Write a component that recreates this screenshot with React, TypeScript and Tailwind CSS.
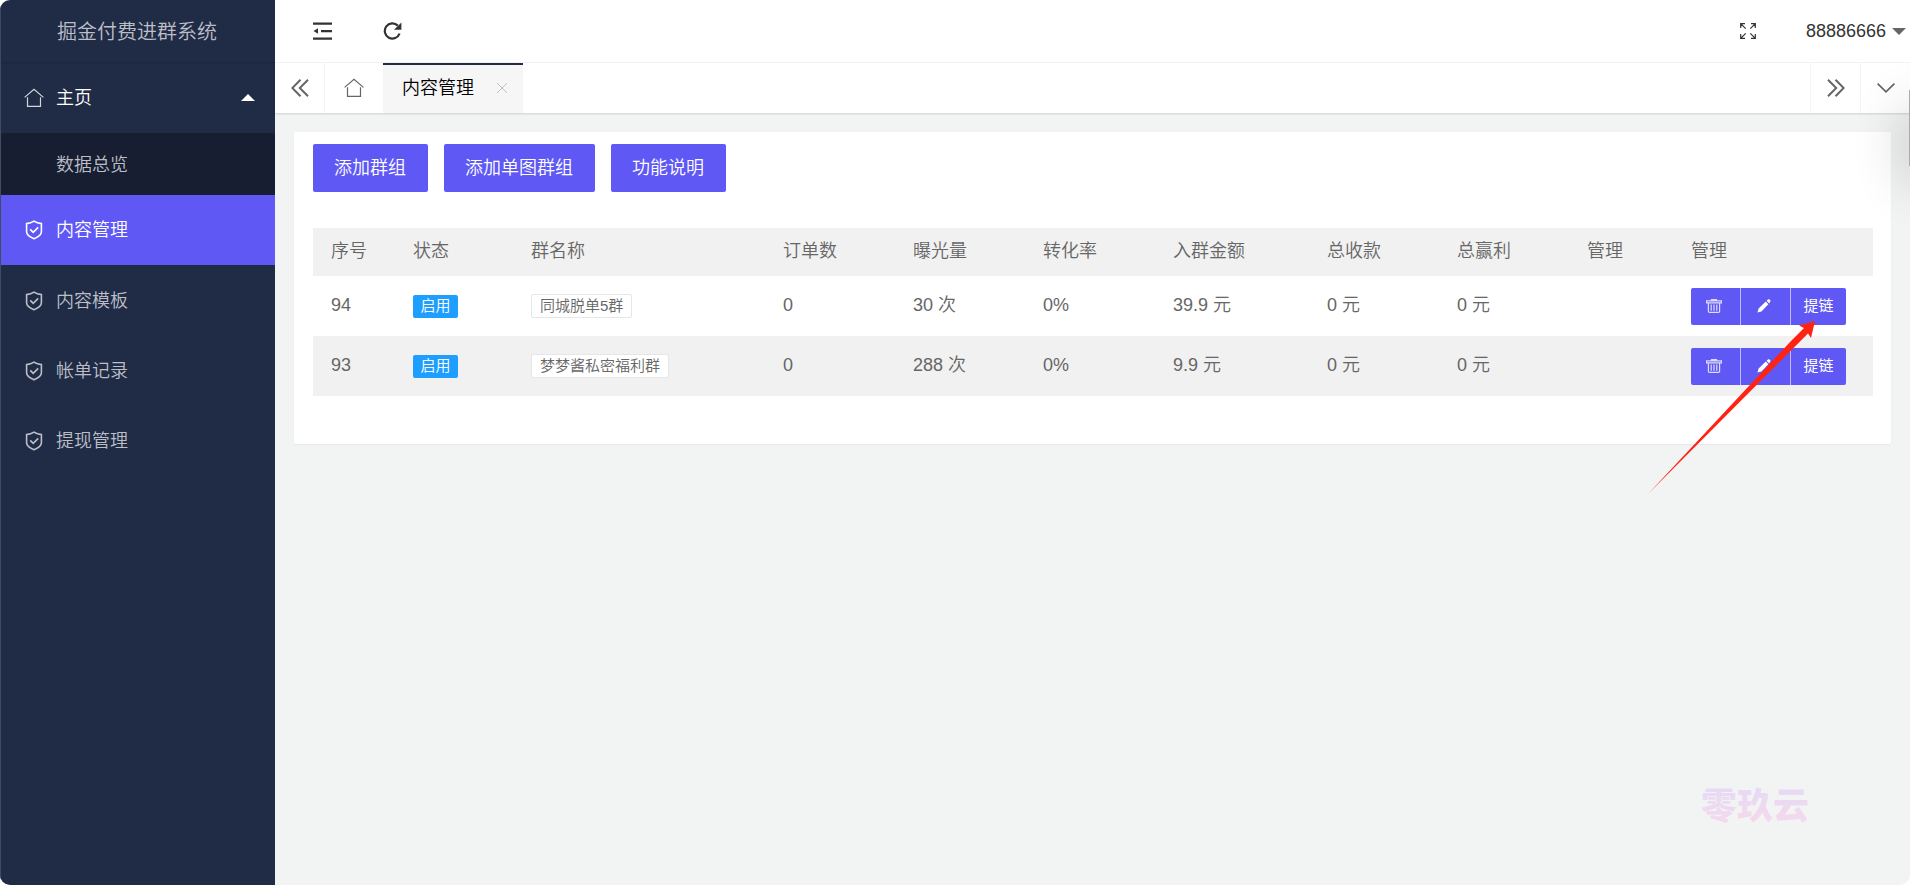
import React from "react";

type IconProps = { className?: string };

const HomeIcon = ({ className = "" }: IconProps) => (
  <svg viewBox="0 0 20 20" className={className} fill="none" stroke="currentColor" strokeWidth="1.2" aria-hidden="true">
    <path d="M0.6 9.4 10 1.4l9.400 8M3.500 9.200v9.200h13V9.200" />
  </svg>
);

const ShieldIcon = ({ className = "" }: IconProps) => (
  <svg viewBox="0 0 18 20" className={className} fill="none" stroke="currentColor" strokeWidth="1.6" aria-hidden="true">
    <path d="M9 1.2c2.2 1.5 4.6 2.2 7.4 2.4v8.2c0 3.4-3 5.2-7.4 7-4.400-1.800-7.400-3.600-7.400-7V3.600C4.400 3.400 6.800 2.700 9 1.200Z" />
    <path d="m5.200 9.400 3 3 5-5" />
  </svg>
);

const IndentIcon = () => (
  <svg viewBox="0 0 20 18" className="h-[18px] w-5" fill="currentColor" aria-hidden="true">
    <path d="M0 0.500h19v2.200H0zM8 8h11v2.200H8zM0 15.500h19v2.200H0zM0.500 9l4.500-2.800v5.600z" />
  </svg>
);

const RefreshIcon = () => (
  <svg viewBox="0 0 20 18" className="h-[18px] w-5" aria-hidden="true">
    <path d="M16.600 11.500A7.600 7.600 0 1 1 14.800 3.600" fill="none" stroke="currentColor" strokeWidth="2.200" />
    <path d="M18.400 0.400v7.400h-7.400z" fill="currentColor" />
  </svg>
);

const FullscreenIcon = () => (
  <svg viewBox="0 0 16 16" className="size-4" fill="none" stroke="currentColor" strokeWidth="1.200" aria-hidden="true">
    <path d="M0.700 5V0.700H5M0.700 0.700l5 5M11 0.700h4.300V5M15.300 0.700l-5 5M0.700 11v4.300H5M0.700 15.300l5-5M11 15.300h4.300V11M15.300 15.300l-5-5" />
  </svg>
);

const DoubleChevron = ({ className = "" }: IconProps) => (
  <svg viewBox="0 0 18 18" className={className} fill="none" stroke="currentColor" strokeWidth="2" aria-hidden="true">
    <path d="M9.500 0.800 1.300 9l8.200 8.200M17 0.800 8.800 9l8.200 8.200" />
  </svg>
);

const TrashIcon = () => (
  <svg viewBox="0 0 16 14" className="h-[14px] w-4 text-[#dedcfd]" fill="none" stroke="currentColor" strokeWidth="1.200" aria-hidden="true">
    <path d="M5.500 1.800V.6h5v1.200M.6 1.800h14.800v2H.6zM2.400 3.800v8.400c0 .8.400 1.200 1.200 1.200h8.800c.8 0 1.200-.4 1.200-1.200V3.800M5.200 5.500v6.200M8 5.500v6.200M10.800 5.500v6.200" />
  </svg>
);

const PencilIcon = () => (
  <svg viewBox="0 0 14 14" className="size-[14px]" fill="currentColor" aria-hidden="true">
    <path d="M0.400 13.600 1.600 9.600 8.800 2.600 11.400 5.200 4.400 12.400ZM9.600 1.800 10.900.6c.7-.6 1.500-.5 2.100.1s.7 1.400.1 2.100L12.200 4.400Z" />
  </svg>
);

const menu = ["内容管理", "内容模板", "帐单记录", "提现管理"];

const columns = [
  { label: "序号", width: "w-[82px]" },
  { label: "状态", width: "w-[118px]" },
  { label: "群名称", width: "w-[252px]" },
  { label: "订单数", width: "w-[130px]" },
  { label: "曝光量", width: "w-[130px]" },
  { label: "转化率", width: "w-[130px]" },
  { label: "入群金额", width: "w-[154px]" },
  { label: "总收款", width: "w-[130px]" },
  { label: "总赢利", width: "w-[130px]" },
  { label: "管理", width: "w-[104px]" },
  { label: "管理", width: "w-[200px]" },
];

const rows = [
  { id: "94", name: "同城脱单5群", orders: "0", views: "30 次", rate: "0%", price: "39.9 元", income: "0 元", profit: "0 元" },
  { id: "93", name: "梦梦酱私密福利群", orders: "0", views: "288 次", rate: "0%", price: "9.9 元", income: "0 元", profit: "0 元" },
];

function Sidebar() {
  return (
    <aside className="flex w-[275px] shrink-0 flex-col border-l border-[#414b62] bg-[#202b46] text-lg text-[#bcbfc7]">
      <h1 className="flex h-[62px] items-center justify-center pt-[2px] pr-[2px] text-xl shadow-[0_1px_2px_rgba(0,0,0,0.15)]">掘金付费进群系统</h1>
      <nav>
        <a href="#home" className="flex h-[71px] items-center pr-5 pl-[23px] text-white">
          <HomeIcon className="mr-3 size-5 text-[#d3d5da]" />
          <span className="flex-1">主页</span>
          <svg viewBox="0 0 14 7" className="h-[7px] w-[14px]" fill="currentColor" aria-hidden="true">
            <path d="M0 7 7 0l7 7z" />
          </svg>
        </a>
        <a href="#overview" className="flex h-[62px] items-center rounded-xs bg-[#171e31] pt-[2px] pl-[55px]">
          数据总览
        </a>
        {menu.map((label, i) => (
          <a
            key={label}
            href="#menu"
            className={
              i === 0
                ? "flex h-[70px] items-center bg-[#5f58f5] pl-[23px] text-white"
                : "flex h-[70px] items-center pt-[2px] pl-[23px]"
            }
          >
            <ShieldIcon className="mr-3 h-5 w-5" />
            {label}
          </a>
        ))}
      </nav>
    </aside>
  );
}

function TopBar() {
  return (
    <header className="flex h-[63px] items-center border-b border-[#f4f4f4] bg-white pr-1 pl-[38px] text-[#333]">
      <button type="button" aria-label="折叠菜单">
        <IndentIcon />
      </button>
      <button type="button" aria-label="刷新" className="ml-[50px]">
        <RefreshIcon />
      </button>
      <button type="button" aria-label="全屏" className="ml-auto">
        <FullscreenIcon />
      </button>
      <button type="button" className="ml-[50px] flex items-center gap-[6px] text-lg">
        88886666
        <svg viewBox="0 0 14 7" className="h-[7px] w-[14px] text-[#666]" fill="currentColor" aria-hidden="true">
          <path d="M0 0h14L7 7z" />
        </svg>
      </button>
    </header>
  );
}

function TabBar() {
  return (
    <div className="relative flex h-[50px] bg-white text-[#666] shadow-[0_1px_2px_rgba(0,0,0,0.15)]">
      <button type="button" aria-label="向左" className="flex w-[50px] items-center justify-center border-r border-[#f4f4f4]">
        <DoubleChevron className="size-[18px]" />
      </button>
      <button type="button" aria-label="主页" className="flex w-[58px] items-center justify-center">
        <HomeIcon className="size-5" />
      </button>
      <div className="flex w-[140px] items-center justify-between border-t-2 border-[#202b46] bg-[#f6f6f6] pr-4 pb-[2px] pl-[19px] text-lg text-black">
        内容管理
        <button type="button" aria-label="关闭" className="text-[#c2c2c2]">
          <svg viewBox="0 0 10 10" className="size-[10px]" fill="none" stroke="currentColor" aria-hidden="true">
            <path d="m0 0 10 10M10 0 0 10" />
          </svg>
        </button>
      </div>
      <button type="button" aria-label="向右" className="ml-auto flex w-[50px] items-center justify-center border-l border-[#f4f4f4]">
        <DoubleChevron className="size-[18px] rotate-180" />
      </button>
      <button type="button" aria-label="更多" className="flex w-[50px] items-center justify-center border-l border-[#f4f4f4]">
        <svg viewBox="0 0 18 10" className="h-[10px] w-[18px]" fill="none" stroke="currentColor" strokeWidth="1.700" aria-hidden="true">
          <path d="m0.600 0.600 8.400 8.200 8.400-8.200" />
        </svg>
      </button>
    </div>
  );
}

function GroupTable() {
  return (
    <table className="mt-9 w-full table-fixed text-left text-lg text-[#666]">
      <thead>
        <tr className="h-12 bg-[#f1f1f1]">
          {columns.map((c, i) => (
            <th key={i} className={`${c.width} pb-[2px] pl-[18px] font-[350]`}>
              {c.label}
            </th>
          ))}
        </tr>
      </thead>
      <tbody>
        {rows.map((r) => (
          <tr key={r.id} className="h-[60px] even:bg-[#f1f1f1]">
            <td className="pb-[2px] pl-[18px]">{r.id}</td>
            <td className="pl-[18px]">
              <span className="flex h-[23px] w-[45px] items-center justify-center rounded-xs bg-[#1e9fff] text-[15px] text-white">启用</span>
            </td>
            <td className="pl-[18px]">
              <span className="flex h-6 w-fit items-center rounded-xs border border-[#e6e6e6] bg-white px-2 text-[15px]">{r.name}</span>
            </td>
            <td className="pb-[2px] pl-[18px]">{r.orders}</td>
            <td className="pb-[2px] pl-[18px]">{r.views}</td>
            <td className="pb-[2px] pl-[18px]">{r.rate}</td>
            <td className="pb-[2px] pl-[18px]">{r.price}</td>
            <td className="pb-[2px] pl-[18px]">{r.income}</td>
            <td className="pb-[2px] pl-[18px]">{r.profit}</td>
            <td />
            <td className="pl-[18px]">
              <div className="flex h-[37px] w-[155px] divide-x divide-[#bfbcfb] overflow-hidden rounded-xs bg-[#5f58f5] text-[15px] text-white">
                <button type="button" aria-label="删除" className="flex w-[50px] items-center justify-center pr-1">
                  <TrashIcon />
                </button>
                <button type="button" aria-label="编辑" className="flex w-[50px] items-center justify-center pr-1">
                  <PencilIcon />
                </button>
                <button type="button" className="flex-1 font-normal">
                  提链
                </button>
              </div>
            </td>
          </tr>
        ))}
      </tbody>
    </table>
  );
}

export default function App() {
  return (
    <div className="relative flex min-h-screen overflow-hidden rounded-[10px] bg-[#f2f4f4] font-['Liberation_Sans','Noto_Sans_CJK_SC',sans-serif] font-[350]">
      <Sidebar />
      <div className="min-w-0 flex-1">
        <TopBar />
        <TabBar />
        <main className="p-[19px]">
          <section className="rounded-xs bg-white px-[18px] pt-3 pb-12 pl-[19px] shadow-[0_1px_2px_rgba(0,0,0,0.05)]">
            <div className="flex gap-4 text-lg text-white">
              {["添加群组", "添加单图群组", "功能说明"].map((label) => (
                <button key={label} type="button" className="h-12 rounded-xs bg-[#5f58f5] pr-[22px] pb-px pl-[21px]">
                  {label}
                </button>
              ))}
            </div>
            <GroupTable />
          </section>
        </main>
      </div>

      <svg viewBox="0 0 168 174" className="pointer-events-none absolute top-[321px] right-[94px] h-[174px] w-[168px]" fill="#ff2314" aria-hidden="true">
        <path d="M167 0 151 4.500 156 7 143 20 0 173 143 29.500 160 12.500 163 17Z" />
      </svg>
      <div className="pointer-events-none absolute top-[90px] -right-[19px] h-[76px] w-5 bg-[#aaaaaa] shadow-[0_16px_50px_rgba(0,0,0,0.3)]" />
      <div className="pointer-events-none absolute right-[101px] bottom-[58px] bg-linear-to-b from-[#e6daf6] to-[#f6d8ea] bg-clip-text text-4xl font-black text-transparent">
        零玖云
      </div>
    </div>
  );
}
